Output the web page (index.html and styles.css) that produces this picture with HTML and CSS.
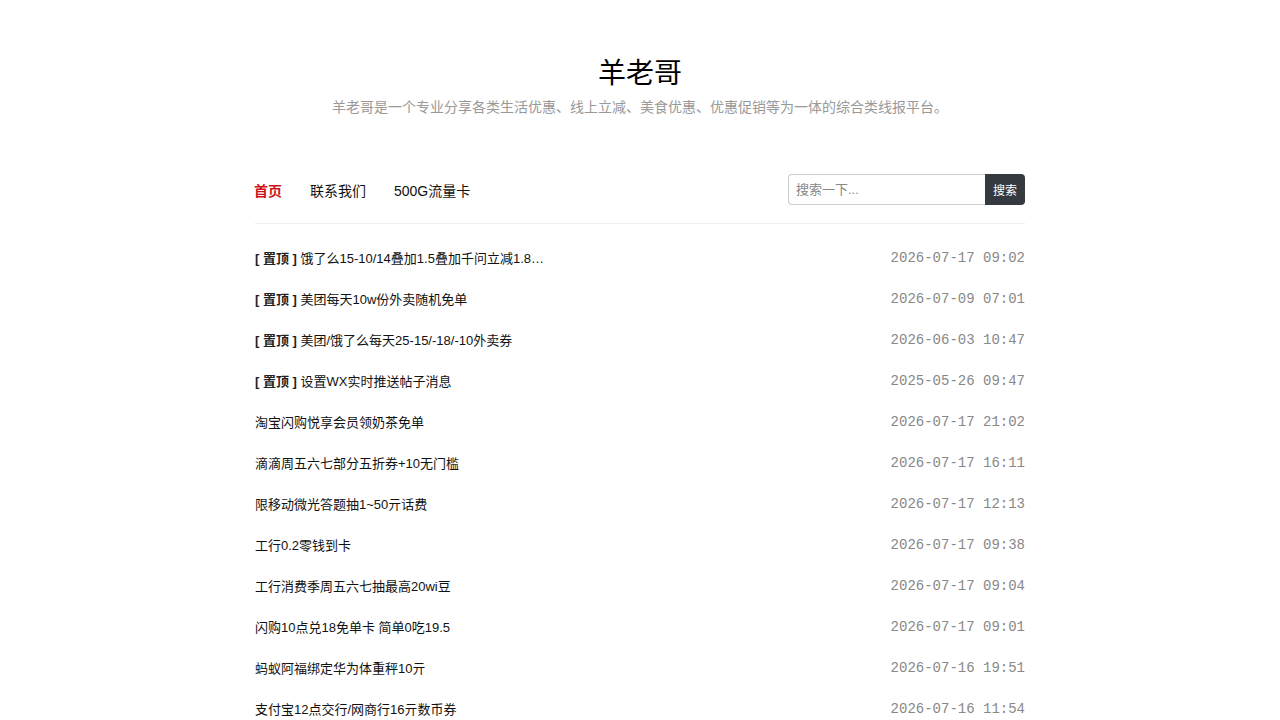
FILE: index.html
```html
<!DOCTYPE html>
<html>
<head>
    <meta charset="utf-8">
    <title>羊老哥</title>
    <link rel="stylesheet" href="styles.css">
</head>
<body>
    <div class="container">
        <div class="header">
            <h1>羊老哥</h1>
            <p class="desc">羊老哥是一个专业分享各类生活优惠、线上立减、美食优惠、优惠促销等为一体的综合类线报平台。</p>
        </div>

        <div class="navbar">
            <div class="nav-links">
                <a href="#" class="active">首页</a>
                <a href="#">联系我们</a>
                <a href="#">500G流量卡</a>
            </div>
            <form class="search">
                <input type="text" placeholder="搜索一下..." />
                <button type="button">搜索</button>
            </form>
        </div>

        <ul class="post-list">
            <li><a href="#" class="title"><b>[ 置顶 ]</b> 饿了么15-10/14叠加1.5叠加千问立减1.88元红包</a><span class="time">2026-07-17 09:02</span></li>
            <li><a href="#" class="title"><b>[ 置顶 ]</b> 美团每天10w份外卖随机免单</a><span class="time">2026-07-09 07:01</span></li>
            <li><a href="#" class="title"><b>[ 置顶 ]</b> 美团/饿了么每天25-15/-18/-10外卖券</a><span class="time">2026-06-03 10:47</span></li>
            <li><a href="#" class="title"><b>[ 置顶 ]</b> 设置WX实时推送帖子消息</a><span class="time">2025-05-26 09:47</span></li>
            <li><a href="#" class="title">淘宝闪购悦享会员领奶茶免单</a><span class="time">2026-07-17 21:02</span></li>
            <li><a href="#" class="title">滴滴周五六七部分五折券+10无门槛</a><span class="time">2026-07-17 16:11</span></li>
            <li><a href="#" class="title">限移动微光答题抽1~50亓话费</a><span class="time">2026-07-17 12:13</span></li>
            <li><a href="#" class="title">工行0.2零钱到卡</a><span class="time">2026-07-17 09:38</span></li>
            <li><a href="#" class="title">工行消费季周五六七抽最高20wi豆</a><span class="time">2026-07-17 09:04</span></li>
            <li><a href="#" class="title">闪购10点兑18免单卡 简单0吃19.5</a><span class="time">2026-07-17 09:01</span></li>
            <li><a href="#" class="title">蚂蚁阿福绑定华为体重秤10亓</a><span class="time">2026-07-16 19:51</span></li>
            <li><a href="#" class="title">支付宝12点交行/网商行16亓数币券</a><span class="time">2026-07-16 11:54</span></li>
        </ul>
    </div>
</body>
</html>
```

FILE: styles.css
```css
body {
    margin: 0;
    font-family: "Liberation Sans", Arial, "Noto Sans CJK SC", sans-serif;
    color: #111;
    background-color: #fff;
}
a {
    color: #111;
    text-decoration: none;
}
.container {
    width: 770px;
    margin: 0 auto;
}
.header {
    text-align: center;
    padding-top: 54px;
}
.header h1 {
    margin: 0;
    font-size: 28px;
    font-weight: normal;
    line-height: 40px;
    color: #000;
}
.desc {
    margin: 3px 0 0;
    font-size: 14px;
    line-height: 20px;
    color: #999;
}
.navbar {
    display: flex;
    justify-content: space-between;
    align-items: center;
    margin-top: 57px;
    padding-bottom: 18px;
    border-bottom: 1px solid #eee;
}
.nav-links {
    display: flex;
    gap: 28px;
    margin-left: -1px;
    padding-top: 3px;
}
.nav-links a {
    font-size: 14px;
    line-height: 20px;
}
.nav-links a.active {
    color: #d0111b;
    font-weight: bold;
}
.search {
    display: flex;
    margin: 0;
}
.search input {
    width: 197px;
    height: 31px;
    box-sizing: border-box;
    padding: 0 7px;
    border: 1px solid #ccc;
    border-right: none;
    border-radius: 4px 0 0 4px;
    font-family: inherit;
    font-size: 13px;
    outline: none;
}
.search input::placeholder {
    color: #888;
}
.search button {
    width: 40px;
    height: 31px;
    border: none;
    border-radius: 0 4px 4px 0;
    background-color: #343a40;
    color: #fff;
    font-family: inherit;
    font-size: 12px;
    padding: 0;
    cursor: pointer;
}
.post-list {
    list-style: none;
    margin: 13px 0 0;
    padding: 0;
}
.post-list li {
    display: flex;
    justify-content: space-between;
    align-items: center;
    height: 41px;
}
.title {
    font-size: 13px;
    max-width: 296px;
    white-space: nowrap;
    overflow: hidden;
    text-overflow: ellipsis;
}
.title b {
    color: #222;
}
.time {
    font-family: "Liberation Mono", "Courier New", monospace;
    font-size: 14px;
    color: #888;
}
```
